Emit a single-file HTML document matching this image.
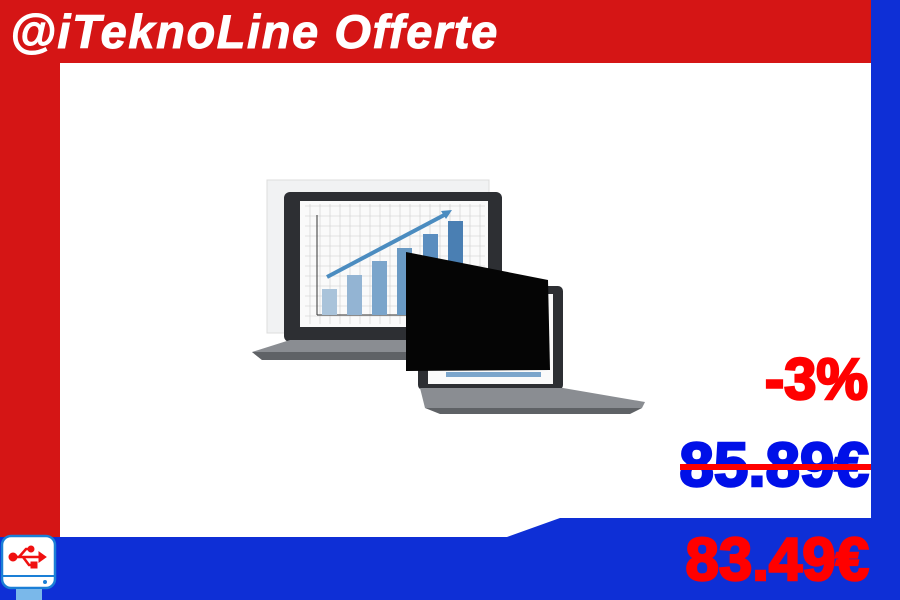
<!DOCTYPE html>
<html><head><meta charset="utf-8"><style>
*{margin:0;padding:0}
body{width:900px;height:600px;position:relative;overflow:hidden;background:#d51515;font-family:"Liberation Sans",sans-serif}
.t{position:absolute;font-weight:bold;white-space:nowrap;line-height:1}
</style></head><body>
<div style="position:absolute;left:871px;top:0;width:29px;height:600px;background:#0e2fd6"></div>
<svg style="position:absolute;left:0;top:0" width="900" height="600">
<rect x="60" y="63" width="811" height="475" fill="#fff"/>
<polygon points="0,537 507,537 560,518 871,518 871,600 0,600" fill="#0e2fd6"/>
<rect x="267" y="180" width="222" height="153" fill="#f1f2f3" stroke="#ddd"/>
<rect x="284" y="192" width="218" height="150" rx="6" fill="#2d2f33"/>
<rect x="300" y="201" width="188" height="126" fill="#fafafa"/>
<g stroke="#ccc" stroke-width="0.6">
<path d="M305 206H485M305 216H485M305 226H485M305 236H485M305 246H485M305 256H485M305 266H485M305 276H485M305 286H485M305 296H485M305 306H485M305 316H485"/>
<path d="M310 204V324M320 204V324M330 204V324M340 204V324M350 204V324M360 204V324M370 204V324M380 204V324M390 204V324M400 204V324M410 204V324M420 204V324M430 204V324M440 204V324M450 204V324M460 204V324M470 204V324M480 204V324"/>
</g>
<path d="M317 315V215M317 315H410" stroke="#333" stroke-width="1"/>
<rect x="322" y="289" width="15" height="26" fill="#a9c3da"/>
<rect x="347" y="275" width="15" height="40" fill="#93b4d3"/>
<rect x="372" y="261" width="15" height="54" fill="#7ba5cb"/>
<rect x="397" y="248" width="15" height="67" fill="#6a9ac4"/>
<rect x="423" y="234" width="15" height="81" fill="#5a8dbf"/>
<rect x="448" y="221" width="15" height="94" fill="#4a7fb3"/>
<path d="M327 277L448 213" stroke="#4b8cc0" stroke-width="4"/>
<path d="M452 210L441 211L446 219Z" fill="#4b8cc0"/>
<path d="M252 352L290 340H500L505 360H262Z" fill="#8a8d92"/>
<path d="M252 352L262 360H420V352Z" fill="#5f6266"/>
<rect x="418" y="286" width="145" height="104" rx="5" fill="#2d2f33"/>
<rect x="428" y="294" width="125" height="90" fill="#fafafa"/>
<path d="M420 388H563L645 402L642 408H425Z" fill="#8a8d92"/>
<path d="M425 408H642L630 414H440Z" fill="#5f6266"/>
<polygon points="406,252 548,280 550,370 406,371" fill="#050505"/>
<rect x="446" y="372" width="95" height="5" fill="#7ba5cb"/>
</svg>
<div class="t" style="left:10px;top:8px;font-size:47px;font-style:italic;color:#fff;letter-spacing:1.6px;-webkit-text-stroke:1px #fff">@iTeknoLine Offerte</div>
<div class="t" style="right:32px;top:351px;font-size:58px;color:#f00;-webkit-text-stroke:2.5px #f00">-3%</div>
<div class="t" style="right:31px;top:435px;font-size:62px;color:#0010e8;-webkit-text-stroke:2.5px #0010e8">85.89€</div>
<div style="position:absolute;left:680px;top:464px;width:191px;height:6px;background:#f00"></div>
<div class="t" style="right:31px;top:530px;font-size:60px;color:#f00;-webkit-text-stroke:2.5px #f00">83.49€</div>
<svg style="position:absolute;left:0;top:534px" width="60" height="66">
<rect x="2" y="2" width="53" height="52" rx="9" fill="#fff" stroke="#1a7fd6" stroke-width="2.5"/>
<path d="M2 42H55" stroke="#1a7fd6" stroke-width="2"/>
<circle cx="45" cy="48" r="2" fill="#1a7fd6"/>
<rect x="16" y="55" width="26" height="11" fill="#7ab8ea"/>
<g fill="#f01010" stroke="#f01010">
<path d="M13 23H40" stroke-width="2.5"/>
<circle cx="13" cy="23" r="4"/>
<path d="M19 23L26 15H31M23 23L29 31H34" fill="none" stroke-width="2.5"/>
<circle cx="31" cy="15" r="3"/>
<rect x="31" y="28" width="6" height="6"/>
<path d="M39 18L46 23L39 28Z"/>
</g>
</svg>
</body></html>
